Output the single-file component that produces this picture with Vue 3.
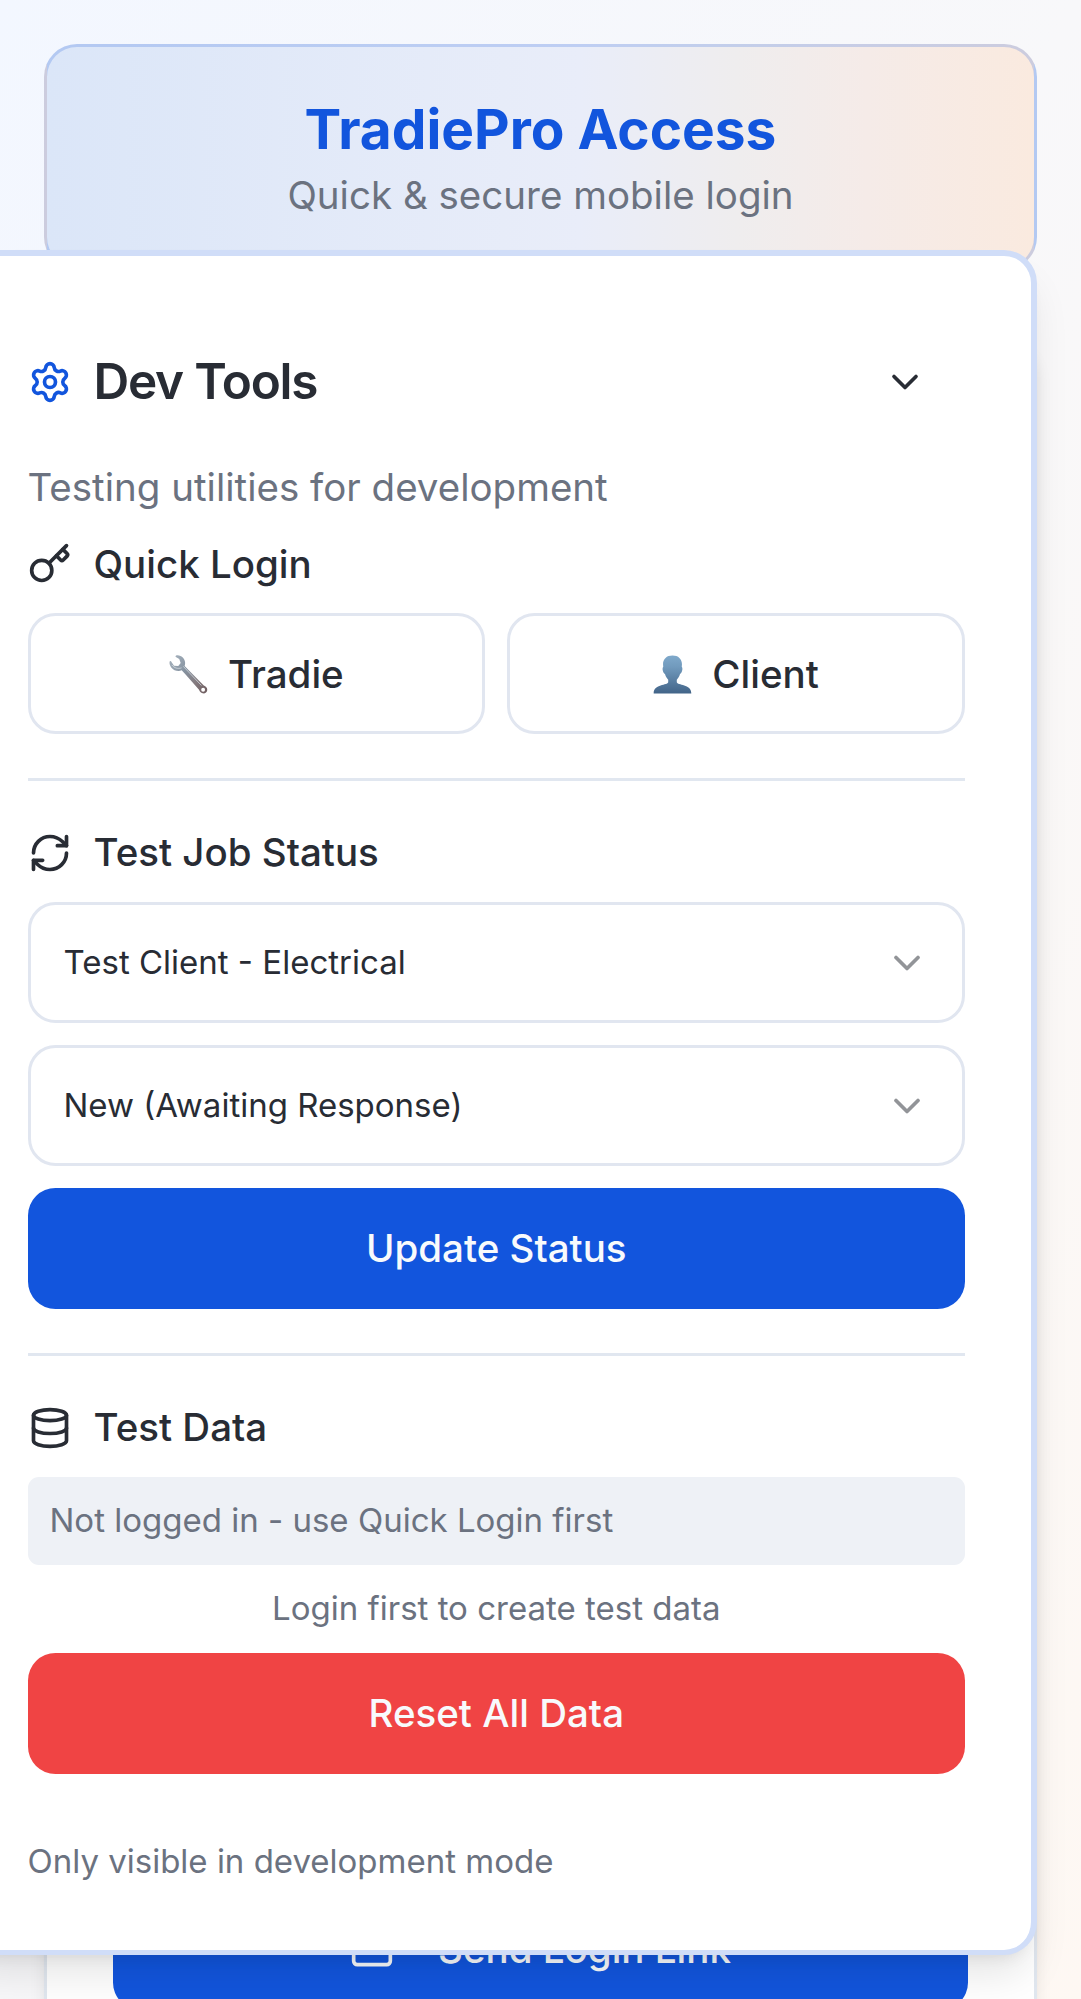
<script setup>
const selects = ['Test Client - Electrical', 'New (Awaiting Response)']
</script>

<template>
  <div class="page">
    <header class="hero">
      <h1>TradiePro Access</h1>
      <p>Quick &amp; secure mobile login</p>
    </header>

    <main class="form-card">
      <button class="btn primary send">
        <svg class="icon" viewBox="0 0 24 24">
          <rect x="2" y="4" width="20" height="16" rx="2" />
          <path d="m22 7-8.97 5.7a1.94 1.94 0 0 1-2.06 0L2 7" />
        </svg>
        <span>Send Login Link</span>
      </button>
    </main>

    <aside class="panel">
      <div class="panel-head">
        <svg class="icon accent" viewBox="0 0 24 24">
          <path d="M9.671 4.136a2.34 2.34 0 0 1 4.659 0 2.34 2.34 0 0 0 3.319 1.915 2.34 2.34 0 0 1 2.33 4.033 2.34 2.34 0 0 0 0 3.831 2.34 2.34 0 0 1-2.33 4.033 2.34 2.34 0 0 0-3.319 1.915 2.34 2.34 0 0 1-4.659 0 2.34 2.34 0 0 0-3.32-1.915 2.34 2.34 0 0 1-2.33-4.033 2.34 2.34 0 0 0 0-3.831A2.34 2.34 0 0 1 6.35 6.051a2.34 2.34 0 0 0 3.319-1.915" />
          <circle cx="12" cy="12" r="3" />
        </svg>
        <h2>Dev Tools</h2>
        <button class="toggle" aria-label="Collapse">
          <svg class="icon" viewBox="0 0 24 24"><path d="m6 9 6 6 6-6" /></svg>
        </button>
      </div>
      <p class="desc">Testing utilities for development</p>

      <section>
        <h3 class="first">
          <svg class="icon" viewBox="0 0 24 24">
            <path d="m15.5 7.5 2.3 2.3a1 1 0 0 0 1.4 0l2.1-2.1a1 1 0 0 0 0-1.4L19 4" />
            <path d="m21 2-9.6 9.6" />
            <circle cx="7.5" cy="15.5" r="5.5" />
          </svg>
          <span>Quick Login</span>
        </h3>
        <div class="pair">
          <button class="btn outline">
            <svg class="emoji" viewBox="0 0 40 40">
              <defs>
                <linearGradient id="steel" x1="0" y1="0" x2="1" y2="1">
                  <stop offset="0" stop-color="#a9b5c0" />
                  <stop offset=".4" stop-color="#8592a0" />
                  <stop offset=".7" stop-color="#857c80" />
                  <stop offset="1" stop-color="#6d5a5c" />
                </linearGradient>
              </defs>
              <path
                fill="url(#steel)"
                fill-rule="evenodd"
                d="M7 .7C8.500-.2 12.500.4 14.600 3 16.600 5.500 17 8.500 16 11.200L20.500 16 35.700 31.400C38 32.200 39.400 34 39.200 36.100 39 38.400 36.800 39.800 34.500 39.300 32.500 38.800 31.500 37.600 30.800 35.700L17 20 13 15.700C9.500 17.200 4.900 16 2.300 12.700.7 10.700.1 8.300.8 6.300L1.900 6.100 5.100 10.900 9.500 11.400 12 8.100 10.500 4.200 6.600 1.900ZM35 33.600A2 2 0 1 0 35 37.600 2 2 0 1 0 35 33.600Z"
              />
              <path fill="none" stroke="#d5dce2" stroke-width=".8" stroke-linecap="round" d="M15 12 33 31M3.200 10.500C5.500 13.500 9 14.500 12.500 13.300" />
            </svg>
            <span>Tradie</span>
          </button>
          <button class="btn outline">
            <svg class="emoji" viewBox="0 0 40 40">
              <defs>
                <linearGradient id="bust" x1="0" y1="0" x2="0" y2="1">
                  <stop offset="0" stop-color="#7fa9cb" />
                  <stop offset=".3" stop-color="#719abd" />
                  <stop offset="1" stop-color="#426488" />
                </linearGradient>
              </defs>
              <path
                fill="url(#bust)"
                d="M20 .5C26 .5 29.700 4 29.700 9.500L29.500 12C31 13.800 29.700 18.200 27.700 19.600 27 22.500 25.300 24.500 24.400 25.400V28C25 31.300 39.300 29.600 39.300 39.500H.7C.7 29.600 15 31.300 15.600 28V25.400C14.700 24.500 13 22.500 12.300 19.600 10.300 18.200 9 13.800 10.500 12L10.300 9.500C10.300 4 14 .5 20 .5Z"
              />
            </svg>
            <span>Client</span>
          </button>
        </div>
      </section>

      <hr />

      <section>
        <h3>
          <svg class="icon" viewBox="0 0 24 24">
            <path d="M3 12a9 9 0 0 1 9-9 9.750 9.750 0 0 1 6.740 2.740L21 8" />
            <path d="M21 3v5h-5" />
            <path d="M21 12a9 9 0 0 1-9 9 9.750 9.750 0 0 1-6.740-2.740L3 16" />
            <path d="M8 16H3v5" />
          </svg>
          <span>Test Job Status</span>
        </h3>
        <div v-for="label in selects" :key="label" class="select">
          <span>{{ label }}</span>
          <svg class="icon" viewBox="0 0 24 24"><path d="m6 9 6 6 6-6" /></svg>
        </div>
        <button class="btn primary">Update Status</button>
      </section>

      <hr />

      <section>
        <h3>
          <svg class="icon" viewBox="0 0 24 24">
            <ellipse cx="12" cy="5" rx="9" ry="3" />
            <path d="M3 5V19A9 3 0 0 0 21 19V5" />
            <path d="M3 12A9 3 0 0 0 21 12" />
          </svg>
          <span>Test Data</span>
        </h3>
        <div class="notice">Not logged in - use Quick Login first</div>
        <p class="hint">Login first to create test data</p>
        <button class="btn danger">Reset All Data</button>
      </section>

      <p class="foot">Only visible in development mode</p>
    </aside>
  </div>
</template>

<style>
body {
  margin: 0;
  overflow: hidden;
}
</style>

<style scoped>
* {
  box-sizing: border-box;
}

h1,
h2,
h3,
p {
  margin: 0;
}

.page {
  position: relative;
  height: 1999px;
  overflow: hidden;
  padding: 44px;
  display: flex;
  flex-direction: column;
  gap: 66px;
  font-family: Inter, "Liberation Sans", sans-serif;
  font-size: 38.5px;
  line-height: 55px;
  color: #282c34;
  background: linear-gradient(to bottom right, #f3f7ff, #f8f8fa 50%, #fef8f3);
}

.hero {
  flex: none;
  height: 226px;
  padding-top: 44px;
  text-align: center;
  border: 3px solid rgba(18, 85, 221, 0.2);
  border-radius: 33px;
  background: linear-gradient(to right, #dbe6f8, #e9edf9 54%, #efedee 70%, #f5ebe8 83%, #faeadf);
}

.hero h1 {
  font-size: 55px;
  line-height: 77px;
  font-weight: 700;
  color: #1255dd;
}

.hero p {
  color: #6b7280;
}

.form-card {
  flex: none;
  height: 1743px;
  padding: 66px;
  display: flex;
  flex-direction: column;
  justify-content: flex-end;
  background: #fff;
  border: 3px solid #e1e7ef;
  border-radius: 33px;
  box-shadow: 0 11px 16.5px -2.75px rgba(0, 0, 0, 0.1);
}

.icon {
  flex: none;
  width: 44px;
  height: 44px;
  fill: none;
  stroke: currentColor;
  stroke-width: 2;
  stroke-linecap: round;
  stroke-linejoin: round;
}

.btn {
  display: flex;
  align-items: center;
  justify-content: center;
  gap: 22px;
  width: 100%;
  height: 121px;
  padding: 0;
  border: 0;
  border-radius: 27.5px;
  font: inherit;
  font-weight: 500;
  color: #f8fafc;
}

.primary {
  background: #1255dd;
}

.danger {
  background: #f04444;
}

.outline {
  gap: 20px;
  padding-top: 2px;
  color: #282c34;
  background: #fff;
  border: 3px solid #e1e6f0;
}

.send {
  flex: none;
  gap: 44px;
}

.panel {
  position: absolute;
  top: 250px;
  left: -44px;
  width: 1081px;
  height: 1705px;
  padding: 65px 66px 65px 65.5px;
  background: #fff;
  border: 6px solid #d0ddf8;
  border-bottom-width: 5px;
  border-radius: 33px;
  box-shadow: 0 27.5px 41.25px -8.25px rgba(0, 0, 0, 0.1), 0 11px 16.5px -11px rgba(0, 0, 0, 0.1);
}

.panel-head {
  display: flex;
  align-items: center;
  gap: 22px;
  height: 121px;
}

.panel-head h2 {
  flex: 1;
  font-size: 49.5px;
  font-weight: 600;
  letter-spacing: -0.025em;
}

.accent {
  color: #1255dd;
}

.toggle {
  display: flex;
  align-items: center;
  justify-content: center;
  width: 121px;
  height: 121px;
  padding: 0;
  border: 0;
  background: none;
  color: inherit;
}

.desc {
  margin: 17.5px 0 21.5px;
  color: #6b7280;
}

section {
  display: flex;
  flex-direction: column;
  gap: 22px;
}

h3 {
  display: flex;
  align-items: center;
  gap: 22px;
  height: 55px;
  font-size: 38.5px;
  line-height: 55px;
  font-weight: 500;
}

.first span {
  padding-top: 2px;
}

.pair {
  display: grid;
  grid-template-columns: 1fr 1fr;
  gap: 22px;
}

.emoji {
  width: 39px;
  height: 39px;
}

hr {
  height: 3px;
  margin: 44px 0;
  border: 0;
  background: #e1e7f0;
}

.select {
  display: flex;
  align-items: center;
  justify-content: space-between;
  height: 121px;
  padding: 0 33px;
  border: 3px solid #e1e6f0;
  border-radius: 27.5px;
  font-size: 33px;
}

.select .icon {
  opacity: 0.5;
}

.notice {
  padding: 21px 22px 23px;
  border-radius: 11px;
  background: #eef1f6;
  color: #6b7280;
  font-size: 33px;
  line-height: 44px;
}

.hint {
  padding-bottom: 2px;
  text-align: center;
  color: #6b7280;
  font-size: 33px;
  line-height: 42px;
}

.foot {
  margin-top: 66px;
  color: #6b7280;
  font-size: 33px;
  line-height: 42px;
}
</style>
